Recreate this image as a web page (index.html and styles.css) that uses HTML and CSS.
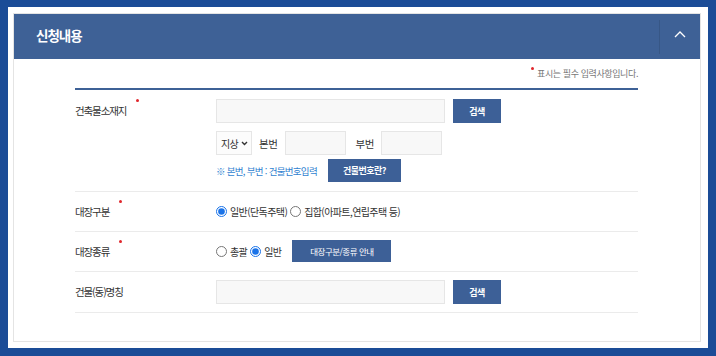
FILE: index.html
```html
<!DOCTYPE html>
<html lang="ko">
<head>
  <meta charset="UTF-8">
  <title>신청내용</title>
  <meta name="viewport" content="width=device-width, initial-scale=1.0">
  <link rel="stylesheet" href="styles.css">
</head>
<body>
  <div class="wrap">
    <div class="panel">
      <header class="panel-head">
        <h2>신청내용</h2>
        <button class="toggle" type="button">
          <svg width="12" height="8" viewBox="0 0 12 8"><polyline points="1,7 6,2 11,7" fill="none" stroke="#fff" stroke-width="1.3"/></svg>
        </button>
      </header>

      <div class="panel-body">
        <p class="notice"><span class="req"></span>표시는 필수 입력사항입니다.</p>

        <div class="form">
          <div class="row row-first">
            <div class="label">건축물소재지<span class="req"></span></div>
            <div class="field">
              <div class="line">
                <input class="input input-wide" type="text">
                <button class="btn btn-search" type="button">검색</button>
              </div>
              <div class="line">
                <div class="select">지상
                  <svg width="7" height="5" viewBox="0 0 7 5"><polyline points="1,1 3.5,3.5 6,1" fill="none" stroke="#333" stroke-width="1.4"/></svg>
                </div>
                <span class="sub">본번</span>
                <input class="input input-small" type="text">
                <span class="sub sub-gap">부번</span>
                <input class="input input-small" type="text">
              </div>
              <div class="line line-tip">
                <span class="tip">※ 본번, 부번 : 건물번호입력</span>
                <button class="btn btn-help" type="button">건물번호란?</button>
              </div>
            </div>
          </div>

          <div class="row">
            <div class="label">대장구분<span class="req"></span></div>
            <div class="field">
              <div class="line radios">
                <label><input type="radio" name="gubun" checked>일반(단독주택)</label>
                <label><input type="radio" name="gubun">집합(아파트,연립주택 등)</label>
              </div>
            </div>
          </div>

          <div class="row">
            <div class="label">대장종류<span class="req"></span></div>
            <div class="field">
              <div class="line radios">
                <label><input type="radio" name="kind">총괄</label>
                <label><input type="radio" name="kind" checked>일반</label>
                <button class="btn btn-guide" type="button">대장구분/종류 안내</button>
              </div>
            </div>
          </div>

          <div class="row">
            <div class="label">건물(동)명칭</div>
            <div class="field">
              <div class="line">
                <input class="input input-wide" type="text">
                <button class="btn btn-search" type="button">검색</button>
              </div>
            </div>
          </div>
        </div>
      </div>
    </div>
  </div>
</body>
</html>
```

FILE: styles.css
```css
:root {
  --frame-blue: #1b4c97;
  --head-blue: #3e6196;
  --btn-blue: #3d6097;
  --line-color: #ebebeb;
  --text-color: #333;
  --field-bg: #f8f8f8;
  --field-border: #e6e6e6;
}

* {
  margin: 0;
  padding: 0;
  box-sizing: border-box;
}

body {
  background: var(--frame-blue);
  font-family: 'Noto Sans CJK KR', 'Noto Sans', sans-serif;
  color: var(--text-color);
  padding: 7px 8px 8px 8px;
  height: 356px;
  overflow: hidden;
}

.wrap {
  background: #fff;
  padding: 6px 7px 6px 5px;
  height: 341px;
}

.panel {
  border: 1px solid #e4e4e4;
  height: 100%;
}

/* Header */
.panel-head {
  display: flex;
  align-items: center;
  justify-content: space-between;
  height: 45px;
  background: var(--head-blue);
  padding: 0 0 4px 22px;
}

.panel-head h2 {
  color: #fff;
  font-size: 13.5px;
  font-weight: 700;
  letter-spacing: -1px;
}

.toggle {
  width: 41px;
  height: 34px;
  margin-top: 4px;
  background: none;
  border: none;
  border-left: 1px solid rgba(0, 0, 0, 0.1);
  display: flex;
  align-items: center;
  justify-content: center;
  padding-bottom: 6px;
  cursor: pointer;
}

/* Body */
.panel-body {
  padding: 0 62px 0 61px;
}

.notice {
  text-align: right;
  font-size: 9px;
  color: #777;
  line-height: 16px;
  padding: 7px 0 6px;
  letter-spacing: -0.4px;
}

.notice .req {
  margin: 0 3px 0 0;
  vertical-align: top;
  margin-top: 1px;
}

.req {
  display: inline-block;
  width: 3px;
  height: 3px;
  border-radius: 50%;
  background: #e0262b;
  vertical-align: top;
  margin-left: 10px;
}

.form {
  border-top: 2px solid var(--head-blue);
}

.row {
  display: flex;
  padding: 8px 0;
  border-bottom: 1px solid var(--line-color);
}

.row-first {
  padding-top: 9px;
  padding-bottom: 9px;
}

.label {
  width: 141px;
  flex-shrink: 0;
  font-size: 10.5px;
  line-height: 23px;
  letter-spacing: -1.1px;
}

.field {
  display: flex;
  flex-direction: column;
  gap: 8px;
}

.line {
  display: flex;
  align-items: center;
}

.line-tip {
  margin-top: -4px;
}

.input {
  height: 24px;
  background: var(--field-bg);
  border: 1px solid var(--field-border);
  outline: none;
}

.input-wide {
  width: 229px;
}

.input-small {
  width: 61px;
}

.select {
  width: 36px;
  height: 24px;
  border: 1px solid var(--field-border);
  background: #fcfcfc;
  font-size: 10px;
  letter-spacing: -0.6px;
  display: flex;
  align-items: center;
  gap: 3px;
  padding-left: 4px;
}

.sub {
  font-size: 10.5px;
  letter-spacing: -0.4px;
  margin: 0 7px 0 7px;
}

.sub-gap {
  margin-left: 10px;
}

.tip {
  font-size: 9.5px;
  color: #2f7fd0;
  letter-spacing: -0.7px;
  margin-right: 11px;
}

.btn {
  background: var(--btn-blue);
  color: #fff;
  border: none;
  font-family: inherit;
  font-size: 9px;
  font-weight: 700;
  letter-spacing: -0.5px;
  cursor: pointer;
}

.btn-search {
  width: 48px;
  height: 24px;
  margin-left: 8px;
}

.btn-help {
  width: 73px;
  height: 23px;
}

.btn-guide {
  width: 99px;
  height: 22px;
  margin-left: 8px;
  font-size: 8.5px;
  font-weight: 400;
}

.radios {
  height: 22px;
  font-size: 10px;
  letter-spacing: -0.6px;
}

.radios label {
  display: flex;
  align-items: center;
  margin-right: 3px;
}

.radios input {
  width: 11px;
  height: 11px;
  margin: 0 3px 0 0;
  accent-color: #1a73e8;
}
```
